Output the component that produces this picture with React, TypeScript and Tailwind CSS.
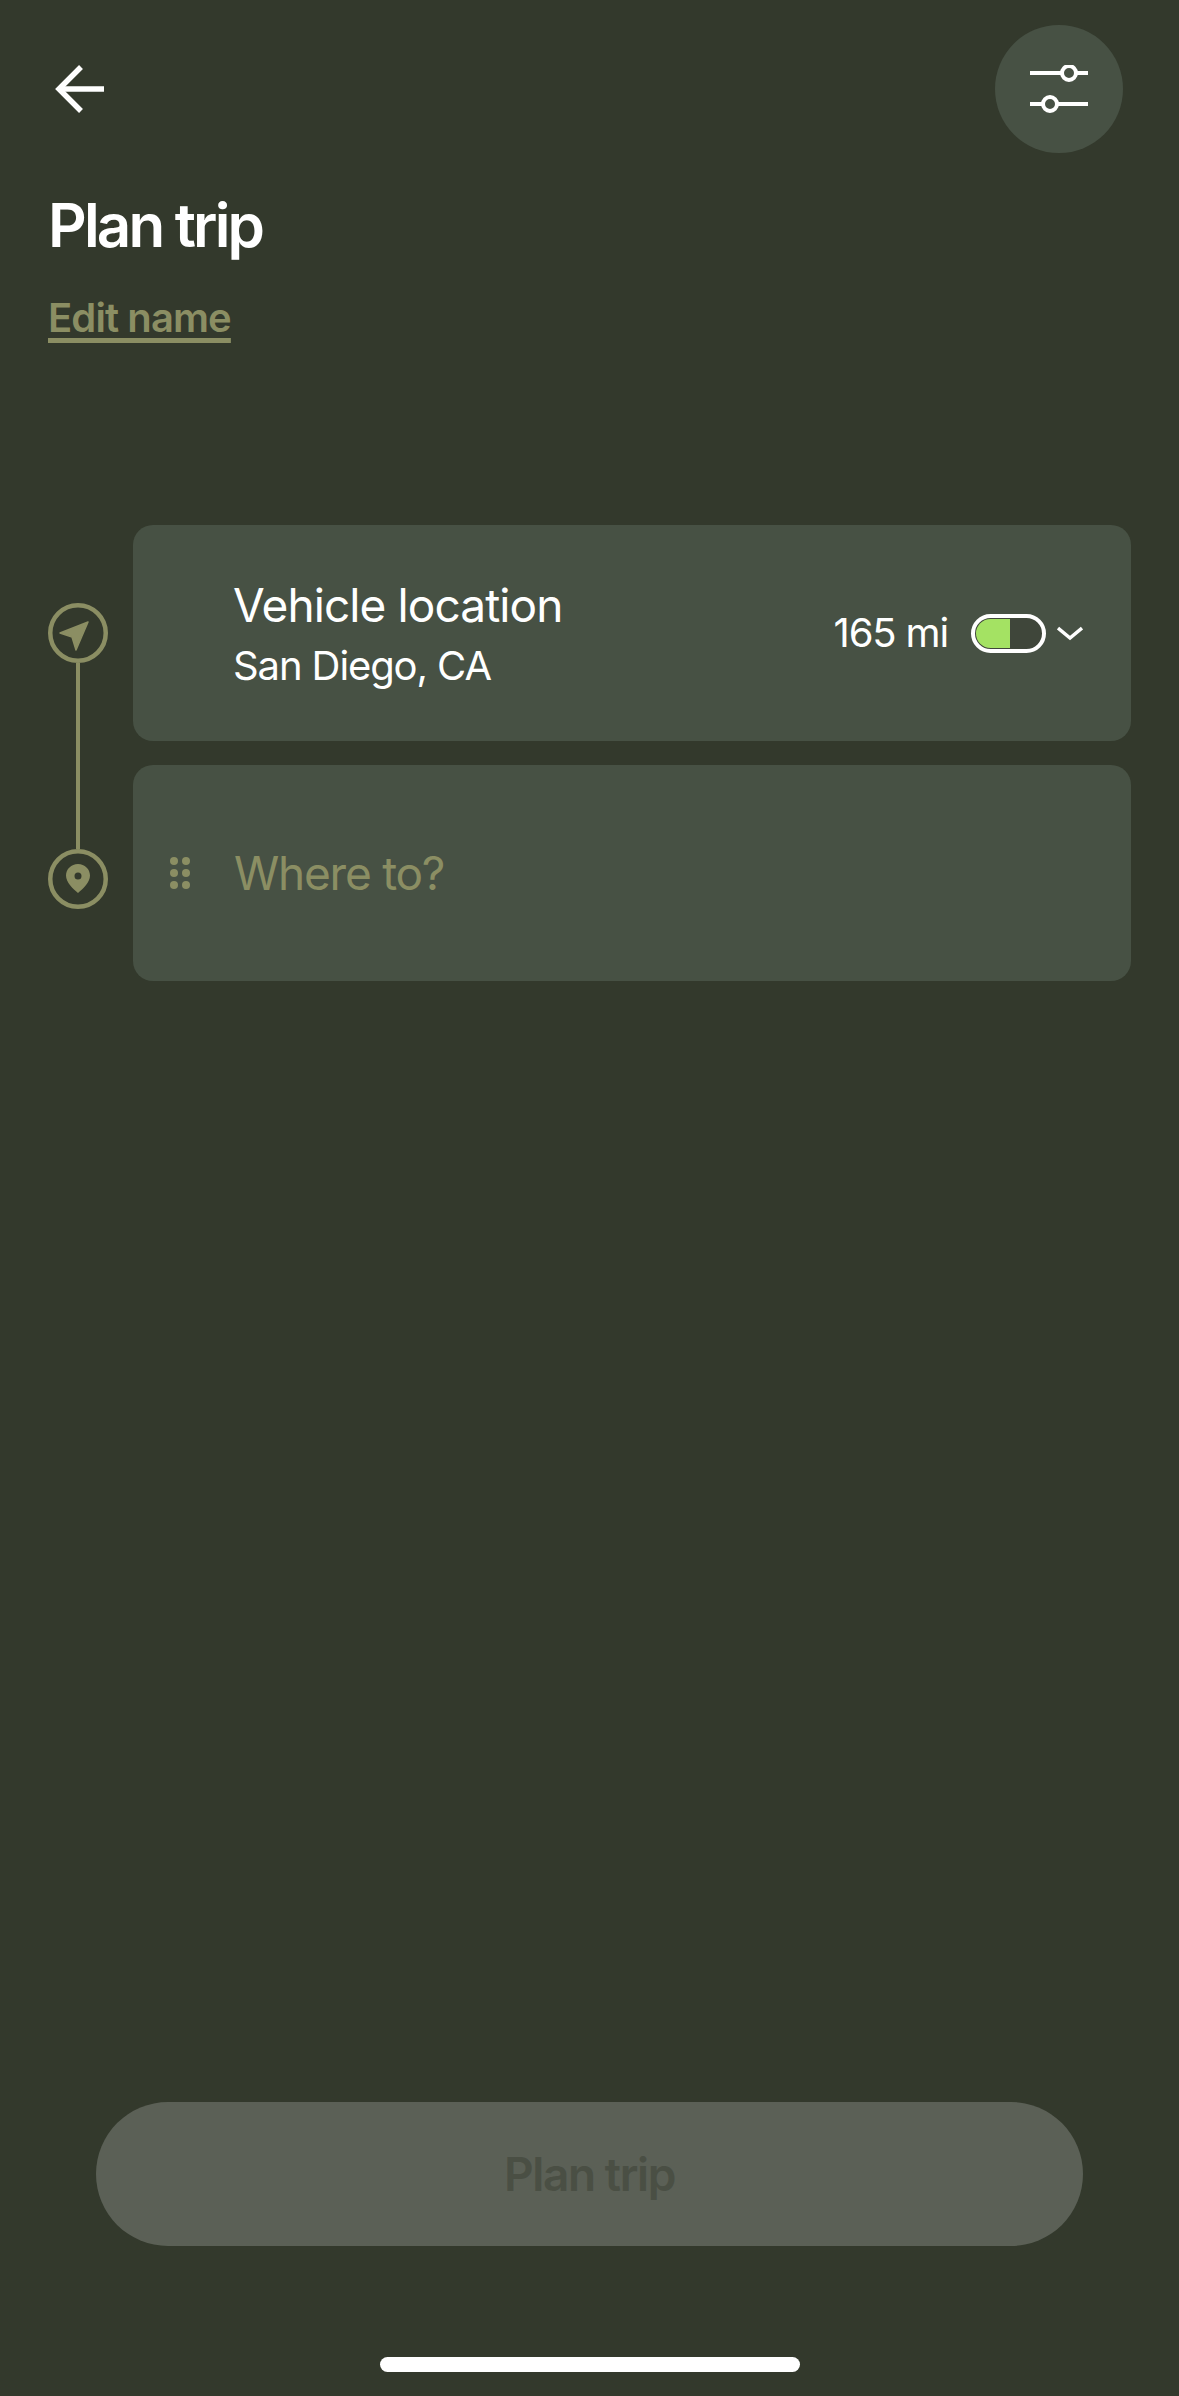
const FONT = "font-['Inter','Liberation_Sans',sans-serif]";

function BackArrow() {
  return (
    <svg width="50" height="50" viewBox="0 0 50 50" fill="none" stroke="#ffffff" strokeWidth="5.5">
      <path d="M49 25H4" />
      <path d="M26 3L4 25l22 22" />
    </svg>
  );
}

function SlidersIcon() {
  return (
    <svg width="58" height="48" viewBox="0 0 58 48" fill="none" stroke="#ffffff" strokeWidth="4">
      <path d="M0 8h32M46 8h12" />
      <circle cx="39" cy="8" r="7" />
      <path d="M0 39h13M27 39h31" />
      <circle cx="20" cy="39" r="7" />
    </svg>
  );
}

function StartMarker() {
  return (
    <svg width="60" height="60" viewBox="0 0 60 60" className="shrink-0">
      <circle cx="30" cy="30" r="27.75" fill="none" stroke="#8b8e63" strokeWidth="4.5" />
      <path d="M40 19L12 30l12 4 4 13z" fill="#8b8e63" stroke="#8b8e63" strokeWidth="1.5" strokeLinejoin="round" />
    </svg>
  );
}

function EndMarker() {
  return (
    <svg width="60" height="60" viewBox="0 0 60 60" className="shrink-0">
      <circle cx="30" cy="30" r="27.75" fill="none" stroke="#8b8e63" strokeWidth="4.5" />
      <path
        fillRule="evenodd"
        d="M30 15c-6.8 0-12 5.2-12 11.6C18 33.500 25 40 30 44c5-4 12-10.500 12-17.400C42 20.200 36.800 15 30 15zm0 8.500a3.500 3.500 0 1 1 0 7 3.500 3.500 0 0 1 0-7z"
        fill="#8b8e63"
      />
    </svg>
  );
}

function DragHandle() {
  return (
    <svg width="20" height="32" viewBox="0 0 20 32" fill="#8b8e63" className="shrink-0">
      <circle cx="4" cy="4" r="4" />
      <circle cx="16" cy="4" r="4" />
      <circle cx="4" cy="16" r="4" />
      <circle cx="16" cy="16" r="4" />
      <circle cx="4" cy="28" r="4" />
      <circle cx="16" cy="28" r="4" />
    </svg>
  );
}

function Battery() {
  return (
    <div className="w-[75px] h-[39px] rounded-full border-[4px] border-white bg-[#3f463a] overflow-hidden p-[1px] shrink-0">
      <div className="w-[34px] h-full bg-[#a4e263] rounded-l-full" />
    </div>
  );
}

function Chevron() {
  return (
    <svg width="26" height="15" viewBox="0 0 26 15" fill="none" stroke="#ffffff" strokeWidth="3.500" className="shrink-0">
      <path d="M1 2l12 10L25 2" />
    </svg>
  );
}

export default function App() {
  return (
    <div className={`${FONT} w-[1179px] h-[2396px] bg-[#33392c] flex flex-col overflow-hidden`}>
      <header className="flex items-center justify-between pt-[25px] pl-[55px] pr-[56px]">
        <button>
          <BackArrow />
        </button>
        <button className="w-[128px] h-[128px] rounded-full bg-[#475144] flex items-center justify-center">
          <SlidersIcon />
        </button>
      </header>

      <div className="pl-[48px]">
        <h1 className="mt-[36px] text-[60px] leading-[72px] font-semibold tracking-[-2.8px] text-white">Plan trip</h1>
        <a className="block mt-[33px] text-[40px] leading-[48px] font-semibold tracking-[-0.9px] text-[#8b8e63] underline decoration-[5px] underline-offset-[6px]">
          Edit name
        </a>
      </div>

      {/* route stops */}
      <section className="flex mt-[183px] pl-[48px]">
        <div className="w-[60px] flex flex-col items-center pt-[78px] pb-[72px]">
          <StartMarker />
          <div className="w-[4px] flex-1 bg-[#8b8e63]" />
          <EndMarker />
        </div>

        <div className="ml-[25px] w-[998px] flex flex-col gap-[24px]">
          <div className="h-[216px] rounded-[20px] bg-[#475144] flex items-center pl-[100px] pr-[48px]">
            <div className="flex flex-col gap-[9px] text-white">
              <span className="text-[46px] leading-[56px] tracking-[-0.9px]">Vehicle location</span>
              <span className="text-[40px] leading-[48px] tracking-[-1.1px]">San Diego, CA</span>
            </div>
            <span className="ml-auto text-[40px] leading-[48px] tracking-[-1.15px] text-white">165 mi</span>
            <div className="ml-[23px] mr-[11px]">
              <Battery />
            </div>
            <Chevron />
          </div>

          <div className="h-[216px] rounded-[20px] bg-[#475144] flex items-center pl-[37px]">
            <DragHandle />
            <span className="ml-[44px] text-[46px] leading-[56px] tracking-[-1.25px] text-[#8b8e63]">Where to?</span>
          </div>
        </div>
      </section>

      <div className="mt-auto flex flex-col items-center">
        <button className="w-[987px] h-[144px] rounded-full bg-[#5b6056] text-[46px] font-semibold tracking-[-1.4px] text-[#4a4f44]">
          Plan trip
        </button>
        <div className="mt-[111px] mb-[24px] w-[420px] h-[15px] rounded-full bg-white" />
      </div>
    </div>
  );
}
